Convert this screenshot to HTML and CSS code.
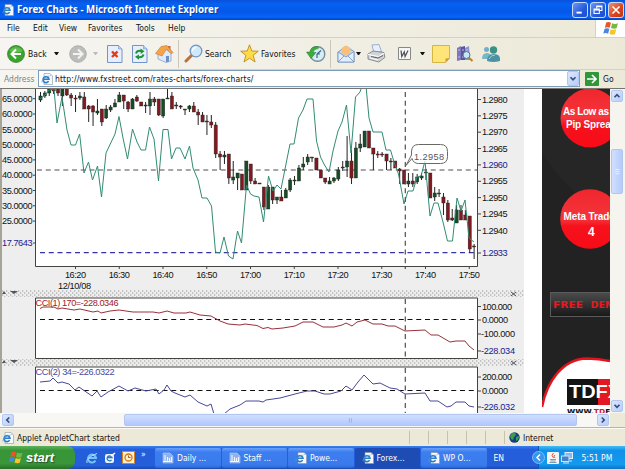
FILE: index.html
```html
<!DOCTYPE html>
<html lang="en">
<head>
  <meta charset="UTF-8" />
  <title>Forex Charts</title>
  <link rel="stylesheet" href="styles.css">
</head>
<body>
  <!-- shared icons -->
  <svg class="defs" width="0" height="0">
    <symbol id="ie" viewBox="0 0 12 12">
      <path d="M3 .5h6l2.5 2.5v8.5H3z" fill="#f7f8fb" stroke="#8a93a8" stroke-width=".6"/>
      <path d="M9 .5v2.6h2.5" fill="#c5cbdc"/>
      <path d="M7.6 8.2A3 3 0 1 1 8 6.3H2.6" fill="none" stroke="#2d7cc4" stroke-width="1.6"/>
      <path d="M1 9.5C.5 7 4 3.400 8.600 3" fill="none" stroke="#59a7e0" stroke-width=".7"/>
    </symbol>
    <symbol id="flag" viewBox="0 0 16 14">
      <path d="M3.500 1.500q2-1.200 4.500.2l-1.200 4.600q-2.400-1-4.500 0z" fill="#e9552a"/>
      <path d="M9 2.100q2.500 1.200 5.500.100l-1.300 4.600q-2.600 1-5.200-.2z" fill="#76b843"/>
      <path d="M2 7.200q2-1 4.500 0l-1.200 4.600q-2.300-1.200-4.500-.1z" fill="#4a86dc"/>
      <path d="M7.700 7.600q2.400 1.200 5.200.2l-1.200 4.500q-2.600 1-5.200-.2z" fill="#f5c52c"/>
    </symbol>
    <symbol id="doc" viewBox="0 0 12 12">
      <path d="M1 1h7l3 3v7H1z" fill="#8fb2ee" stroke="#b9cff6" stroke-width=".6"/>
      <path d="M3 3v6M1 9.500h9M5.500 5v4M7.500 6v3M9.500 5v4" stroke="#f2f6fd" stroke-width="1.100" fill="none"/>
    </symbol>
  </svg>

  <header class="titlebar">
    <svg class="title-icon" width="12" height="12"><use href="#ie"/></svg>
    <h1>Forex Charts - Microsoft Internet Explorer</h1>
    <div class="window-buttons">
      <span class="win-btn"><svg viewBox="0 0 16 16"><path d="M4 11h6" stroke="#fff" stroke-width="2.200"/></svg></span>
      <span class="win-btn"><svg viewBox="0 0 16 16"><path d="M6.500 6V3.500h6v5H10M3.500 7h6v5h-6zM3.500 8h6M6.500 4.300h6" fill="none" stroke="#fff" stroke-width="1.200"/></svg></span>
      <span class="win-btn close"><svg viewBox="0 0 16 16"><path d="M4 4l8 8M12 4l-8 8" stroke="#fff" stroke-width="1.800"/></svg></span>
    </div>
  </header>

  <nav class="menubar">
    <span>File</span><span>Edit</span><span>View</span><span>Favorites</span><span>Tools</span><span>Help</span>
    <div class="throbber"><svg width="18" height="15"><use href="#flag"/></svg></div>
  </nav>

  <div class="toolbar">
    <svg width="18" height="18" viewBox="0 0 18 18"><circle cx="9" cy="9" r="8.500" fill="#3ba42d" stroke="#2b7d25" stroke-width=".7"/><path d="M2.500 6a7 6 0 0 1 13 0q-6 3-13 0" fill="#7bcf66" opacity=".6"/><path d="M9 4.500L4.500 9 9 13.500M5 9h9" fill="none" stroke="#fff" stroke-width="2"/></svg>
    <span>Back</span>
    <i class="arrow"></i>
    <svg width="18" height="18" viewBox="0 0 18 18"><circle cx="9" cy="9" r="8.300" fill="#bdbdbb" stroke="#9e9e9b" stroke-width=".7"/><path d="M9 4.500L13.500 9 9 13.500M13 9H4" fill="none" stroke="#f3f3f0" stroke-width="2"/></svg>
    <i class="arrow off"></i>
    <svg width="16" height="18" viewBox="0 0 16 18"><path d="M.5.5h11l3.500 3.500v13.500H.5z" fill="#e5efff" stroke="#7494c8"/><path d="M11.500.5V4H15" fill="#bdd0f0" stroke="#7494c8" stroke-width=".6"/><path d="M5 6.500l5.500 5.500M10.500 6.500L5 12" stroke="#e43a14" stroke-width="2.400"/></svg>
    <svg width="16" height="18" viewBox="0 0 16 18"><path d="M.5.5h11l3.500 3.500v13.500H.5z" fill="#e5efff" stroke="#7494c8"/><path d="M11.500.5V4H15" fill="#bdd0f0" stroke="#7494c8" stroke-width=".6"/><path d="M4 8.500Q5 5 9.500 6M11.500 9.500Q10.500 13 6 12" fill="none" stroke="#219332" stroke-width="2"/><path d="M8.500 3.500L12.500 6.300 8.700 9zM7 9.500L3 11.800 7 14.800z" fill="#219332"/></svg>
    <svg width="19" height="19" viewBox="0 0 19 19"><path d="M3 9l6-5 7 5v8l-5 1.500L3 15z" fill="#dfe9f9" stroke="#7e9ac7" stroke-width=".7"/><path d="M13 2h2.500v4L13 4z" fill="#c96543"/><path d="M.5 9.500L6 2.500l6-1 6 7-1.500 1.500-5-5L7 12z" fill="#f3a44a" stroke="#c97728" stroke-width=".6"/><path d="M11 12h3v5.500l-3 .8z" fill="#6b8fc9"/></svg>
    <i class="sep"></i>
    <svg width="19" height="19" viewBox="0 0 19 19"><path d="M8 11L2 17" stroke="#b5723c" stroke-width="3" stroke-linecap="round"/><circle cx="12" cy="7" r="5.800" fill="#cfe8fb" stroke="#7295c2" stroke-width="1.300"/><path d="M8.500 7A3.500 3.500 0 0 1 12 3.500" stroke="#fff" stroke-width="1.500" fill="none"/></svg>
    <span>Search</span>
    <svg width="19" height="19" viewBox="0 0 19 19"><path d="M9.500.8l2.300 6.200 6.500.2-5.200 4.100 2 6.700-5.600-3.800L4 18l1.900-6.700L.7 7.200 7.200 7z" fill="#ffdc45" stroke="#c18a20" stroke-width=".9"/></svg>
    <span>Favorites</span>
    <svg width="20" height="18" viewBox="0 0 20 18"><circle cx="11.500" cy="9" r="7.300" fill="#d8ecf5" stroke="#748f98" stroke-width="1.400"/><path d="M11 9l4-3.500M11 9h3M11 9v4" stroke="#38688b" stroke-width="1.200"/><path d="M12.500 1.700Q5 .5 4 7H.5L5 13.500 10 7.500H7Q8 3.500 12.500 3.500" fill="#3dab3d" stroke="#247a2a" stroke-width=".5"/></svg>
    <i class="sep"></i>
    <svg width="18" height="18" viewBox="0 0 18 18"><path d="M1 7l8-6 8 5.500V17H1z" fill="#bed6f5" stroke="#6e8fbe" stroke-width=".8"/><circle cx="9" cy="5.500" r="4.500" fill="#fbc077"/><path d="M1 7l8 5 8-5.500V17H1z" fill="#e1eefe" stroke="#6e8fbe" stroke-width=".8"/><path d="M1 17l6-6M17 17l-6-6" stroke="#6e8fbe" stroke-width=".8"/></svg>
    <i class="arrow"></i>
    <svg width="19" height="19" viewBox="0 0 19 19"><path d="M5 1l7-.5 2.500 7L7 9z" fill="#e6f0ff" stroke="#7995bf" stroke-width=".7"/><path d="M1 10l5-3 11 1.500.8 5-6 4.500L1 15z" fill="#d2d3d4" stroke="#747980" stroke-width=".8"/><path d="M1 10.500l10.500 2 6-3.500M3 14l8 2" fill="none" stroke="#fff"/><path d="M4 12.500l7 1.500 5-2.500" fill="none" stroke="#5c6166"/></svg>
    <svg width="13" height="13" viewBox="0 0 13 13"><path d="M.5.5h12v12H.5z" fill="#f5f6f5" stroke="#888"/><path d="M3 3.500l.8 6L6.300 5l.8 4.500L10 3.500" fill="none" stroke="#555" stroke-width="1.300"/></svg>
    <i class="arrow"></i>
    <svg width="18" height="18" viewBox="0 0 18 18"><path d="M.5.5h17v13l-4 4H.5z" fill="#ffe477" stroke="#d5b543"/><path d="M17.500 13l-4 4.500v-4z" fill="#d69c25"/></svg>
    <svg width="18" height="18" viewBox="0 0 18 18"><path d="M1 3l4-2v14l-4 1z" fill="#7d77be"/><path d="M5 2l4-1v14H5z" fill="#56569b"/><path d="M9 3l4-2 1 14H9z" fill="#9094ca"/><path d="M2 5h2M6 5h2M10 5h2M2 12h2M6 12h2" stroke="#d2b5da"/><path d="M12 12l4.500 4" stroke="#b98129" stroke-width="2"/><circle cx="10.500" cy="10" r="3.500" fill="#c4e6f6" stroke="#4f7597"/></svg>
    <svg width="20" height="18" viewBox="0 0 20 18"><circle cx="5.500" cy="4.500" r="2.500" fill="#77acc9"/><path d="M1 14q0-6 5-6t5 6z" fill="#79b6c6"/><circle cx="12.500" cy="5" r="3.700" fill="#3c9086"/><path d="M6 16q0-7 7-7t6 7q-7 2-13 0" fill="#4d91a8"/><path d="M8 14q2-4 6-4" stroke="#a2d8a2" fill="none"/></svg>
  </div>

  <div class="addressbar">
    <label>Address</label>
    <div class="address">
      <svg width="12" height="12"><use href="#ie"/></svg>
      <span>http://www.fxstreet.com/rates-charts/forex-charts/</span>
      <b class="sb-btn"><svg viewBox="0 0 12 12"><path d="M3 4.500l3 3 3-3" class="chev"/></svg></b>
    </div>
    <svg class="go-icon" width="14" height="14" viewBox="0 0 14 14"><rect width="14" height="14" rx="1" fill="#31963a"/><path d="M7 3l4 4-4 4M10.500 7H2" fill="none" stroke="#fff" stroke-width="1.700"/></svg>
    <span class="go">Go</span>
  </div>

  <main class="content">
    <div class="page">
      <svg class="chart" width="522" height="324" viewBox="2 89 522 324">
        <defs>
          <pattern id="dots" width="4" height="4" patternUnits="userSpaceOnUse">
            <rect width="4" height="4" fill="#eee"/>
            <path d="M0 1h1.300M2 3h1.300" stroke="#999" stroke-width="1.200"/>
          </pattern>
          <clipPath id="mainClip"><rect x="36" y="89" width="441" height="177"/></clipPath>
        </defs>
        <rect x="2" y="89" width="522" height="324" fill="#eee"/>
        <rect x="36" y="89" width="441" height="177" fill="#fff"/>
        <path d="M35.500 89V266.500H477.500V89" class="frame"/>
        <g id="axes"></g>
        <path d="M37 170H477" class="cross dash"/>
        <path d="M40 252.700H477" class="last dash"/>
        <g clip-path="url(#mainClip)">
          <g id="candles"></g>
          <polyline id="overlay" class="overlay"/>
        </g>

        <rect x="2" y="290" width="522" height="7" fill="url(#dots)"/>
        <rect x="36" y="298" width="441" height="60" fill="#fff"/>
        <path d="M35.500 358.500V298H477.500V358.500z" class="frame"/>
        <path d="M40 319.500H477" class="zero dash"/>
        <polyline id="cci1" class="cci1"/>
        <text x="35.500" y="306" textLength="83" class="lbl red">CCI(1) 170=-228.0346</text>

        <rect x="2" y="359" width="522" height="7" fill="url(#dots)"/>
        <rect x="36" y="367" width="441" height="46" fill="#fff"/>
        <path d="M35.500 413V367H477.500V413" class="frame"/>
        <path d="M40 390.500H477" class="zero dash"/>
        <polyline id="cci2" class="cci2"/>
        <text x="35.500" y="375" textLength="79" class="lbl violet">CCI(2) 34=-226.0322</text>

        <path d="M405.300 92V269M405.300 299V358M405.300 368V413" class="cross dash"/>
        <path d="M10 291h8l-4 3zM10 360h8l-4 3zM2 294l2-3 2 3zM2 363l2-3 2 3z" fill="#555"/>
        <path d="M511 292l5 4M516 292l-5 4M511 361l5 4M516 361l-5 4" stroke="#555"/>
        <path d="M411.500 155V152q0-7.500 7-7.500h22q7 0 7 7v5q0 7-7 7h-22q-5 0-6.500-5l-6 7z" class="callout"/>
        <text x="414" y="160" textLength="30" class="lbl tip">1.2958</text>
      </svg>

      <aside class="banner">
        <svg width="68" height="324" viewBox="0 0 68 324">
          <defs>
            <linearGradient id="ball" x2="0" y2="1"><stop offset="0" stop-color="#f0262d"/><stop offset=".5" stop-color="#f4353b"/><stop offset=".62" stop-color="#f5121d"/><stop offset="1" stop-color="#f80b17"/></linearGradient>
            <linearGradient id="demo" x2="0" y2="1"><stop offset="0" stop-color="#4c4c4c"/><stop offset="1" stop-color="#181818"/></linearGradient>
          </defs>
          <rect width="68" height="324" fill="#222"/>
          <path d="M0 65Q25 100 68 135V0H0z" fill="#262626"/>
          <circle cx="48" cy="29" r="29.500" fill="url(#ball)"/>
          <circle cx="48" cy="130" r="29.800" fill="url(#ball)"/>
          <g class="ball-text">
            <text x="21" y="26" textLength="46">As Low as</text>
            <text x="24" y="39" textLength="56">Pip Spreads</text>
            <text x="21.500" y="131" textLength="55">Meta Trader</text>
            <text x="46" y="147" class="four">4</text>
          </g>
          <rect x="8.500" y="203.500" width="70" height="24" fill="url(#demo)" stroke="#5b5b5b"/>
          <g class="demo-text">
            <text x="11" y="219" textLength="30" lengthAdjust="spacingAndGlyphs">FREE</text>
            <text x="48.500" y="219" textLength="32" lengthAdjust="spacingAndGlyphs">DEMO</text>
          </g>
          <path d="M0 324V315C5 292 20 270 45 269.500Q57 270 68 272V324z" fill="#fff"/>
          <path d="M0 318C5 293 20 270 45 269.500Q57 270 68 272" fill="none" stroke="#e5111b" stroke-width="2.500"/>
          <rect x="25" y="290" width="31" height="26" fill="#141414"/>
          <rect x="56" y="290" width="12" height="26" fill="#e31822"/>
          <text x="27" y="309" textLength="52" lengthAdjust="spacingAndGlyphs" class="logo-text">TDFX</text>
          <text x="25" y="324.500" textLength="49" lengthAdjust="spacingAndGlyphs" class="www">WWW.<tspan fill="#d0222a">TD</tspan>FX</text>
        </svg>
      </aside>
    </div>
    <div class="vscroll">
      <b class="sb-btn"><svg viewBox="0 0 12 12"><path d="M3 7.500l3-3 3 3" class="chev"/></svg></b>
      <b class="thumb"><svg viewBox="0 0 12 12"><path d="M4 3h5M4 5.500h5M4 8h5" stroke="#eef4fe"/></svg></b>
      <b class="sb-btn down"><svg viewBox="0 0 12 12"><path d="M3 4.500l3 3 3-3" class="chev"/></svg></b>
    </div>
  </main>

  <div class="hscroll">
    <b class="sb-btn"><svg viewBox="0 0 12 12"><path d="M7.500 3l-3 3 3 3" class="chev"/></svg></b>
    <b class="thumb"><svg viewBox="0 0 12 12"><path d="M4 4v5M6.500 4v5" stroke="#8eaee8"/></svg></b>
    <b class="sb-btn"><svg viewBox="0 0 12 12"><path d="M4.500 3l3 3-3 3" class="chev"/></svg></b>
  </div>

  <div class="statusbar">
    <svg width="12" height="12"><use href="#ie"/></svg>
    <span class="status-text">Applet AppletChart started</span>
    <i></i><i></i><i></i><i></i><i></i><i></i>
    <svg class="globe" width="11" height="11" viewBox="0 0 11 11"><circle cx="5.500" cy="5.500" r="5.200" fill="#173b86"/><path d="M1 4q2-4 5-3l1 2-2 2-1 3-2-1zM7 5l3-1q0 4-3 5z" fill="#38a047"/></svg>
    <span class="zone">Internet</span>
  </div>

  <footer class="taskbar">
    <div class="start"><svg width="16" height="15"><use href="#flag"/></svg><span>start</span></div>
    <div class="quick">
      <svg width="12" height="12" viewBox="0 0 12 12"><path d="M9.500 8.500A4 4 0 1 1 10 6H3" fill="none" stroke="#74c3fa" stroke-width="2"/><path d="M1 11Q-1 6 11 1.500" fill="none" stroke="#b3dffb"/></svg>
      <svg width="12" height="12" viewBox="0 0 12 12"><rect x="1" y="2" width="9" height="9" rx="2" fill="#e9f3fd"/><path d="M7.500 8A2.500 2.500 0 1 1 8 5.500H4" fill="none" stroke="#2b77b5" stroke-width="1.300"/><path d="M7 4l4-3" stroke="#fff" stroke-width="1.500"/></svg>
      <svg width="13" height="13" viewBox="0 0 13 13"><rect x=".5" y=".5" width="12" height="12" fill="#fff1cd" stroke="#d98322"/><circle cx="6.500" cy="6.500" r="3.500" fill="none" stroke="#d17a1d" stroke-width="1.300"/><path d="M6.500 4.500v2h2" fill="none" stroke="#a85d13"/></svg>
      <span>»</span>
    </div>
    <div class="tasks">
      <div class="task"><svg width="12" height="12"><use href="#doc"/></svg>Daily ...</div>
      <div class="task"><svg width="12" height="12"><use href="#doc"/></svg>Staff ...</div>
      <div class="task"><svg width="12" height="12"><use href="#ie"/></svg>Powe...</div>
      <div class="task active"><svg width="12" height="12"><use href="#ie"/></svg>Forex...</div>
      <div class="task"><svg width="12" height="12"><use href="#ie"/></svg>WP O...</div>
    </div>
    <span class="lang">EN</span>
    <div class="tray">
      <svg class="expand" width="13" height="13" viewBox="0 0 13 13"><circle cx="6.500" cy="6.500" r="6" fill="#3795ef" stroke="#9bd2fb" stroke-width=".7"/><path d="M8 3.500l-3 3 3 3" fill="none" stroke="#fff" stroke-width="1.500"/></svg>
      <svg width="12" height="12" viewBox="0 0 12 12"><rect width="12" height="12" rx="1" fill="#f2f4f5"/><path d="M6.500 1q-3 2 0 5M8 3q-2 1 0 3" fill="none" stroke="#d85b3c"/><path d="M3 7.500h6M3.500 9h5M2.500 10.500h7" stroke="#697fa2" stroke-width=".8"/></svg>
      <svg width="12" height="12" viewBox="0 0 12 12"><rect x="4" y=".5" width="7.500" height="6" fill="#84b8ee" stroke="#dceeff"/><rect x=".5" y="4" width="7.500" height="5.500" fill="#4481c7" stroke="#cbe4fb"/><path d="M2 11h6M9 9h2" stroke="#d7e8f7"/></svg>
      <span>5:51 PM</span>
    </div>
  </footer>
  <script src="chart.js"></script>
</body>
</html>
```
FILE: styles.css
```css
* {
  margin: 0;
  padding: 0;
  box-sizing: border-box;
}

body {
  width: 625px;
  height: 469px;
  overflow: hidden;
  display: flex;
  flex-direction: column;
  background: #ece9d8;
  color: #111;
  font-family: "DejaVu Sans Condensed", "DejaVu Sans", Tahoma, sans-serif;
  font-stretch: condensed;
  font-size: 8.5px;
  white-space: nowrap;
}

svg {
  display: block;
  flex: none;
}

.defs {
  position: absolute;
}

/* Title bar */
.titlebar {
  height: 20px;
  flex: none;
  display: flex;
  align-items: center;
  padding: 0 1px 0 2px;
  background: linear-gradient(#0a50d8, #0561f2 20%, #0458e8 60%, #0565fb 85%, #0341bc);
}

.titlebar h1 {
  margin-left: 3px;
  width: 204px;
  color: #fff;
  font-family: "Noto Sans", sans-serif;
  font-stretch: normal;
  font-size: 9.7px;
  line-height: 18px;
  font-weight: bold;
  text-shadow: 1px 1px 0 #0a3aa0;
}

.window-buttons {
  display: flex;
  gap: 2px;
  margin-left: auto;
}

.win-btn {
  width: 16px;
  height: 16px;
  border: 1px solid #c9dafb;
  border-radius: 3px;
  background: linear-gradient(135deg, #6f98f5, #2459d9 60%, #1c4fd0);
}

.win-btn.close {
  background: linear-gradient(135deg, #ee9176, #d9441c 60%, #bf3612);
}

/* Menu */
.menubar {
  height: 18px;
  flex: none;
  display: grid;
  grid-template-columns: 26px 26px 29px 48px 32px 1fr 30px;
  align-items: center;
  padding-left: 7px;
  background: linear-gradient(90deg, #f6f5f1, #ece9d8);
  border-bottom: 1px solid #d4d1c3;
}

.menubar span {
  margin-top: -2px;
}

.throbber {
  height: 17px;
  padding: 1px 0 0 6px;
  background: #fff;
  border-left: 1px solid #d4d1c3;
}

.toolbar {
  height: 32px;
  flex: none;
  display: grid;
  grid-template-columns: 21px 26px 15px 24px 14px 25px 23px 23px 6px 21px 35px 21px 45px 24px 7px 19px 11px 31px 22px 12px 24px 25px 20px;
  align-items: center;
  padding-left: 7px;
  background: linear-gradient(90deg, #f6f5f1, #ece9d8);
  border-bottom: 1px solid #d4d1c3;
}

.arrow {
  width: 5px;
  border: 2.5px solid transparent;
  border-top: 3px solid #111;
  border-bottom: 0;
}

.arrow.off {
  border-top-color: #bbb;
}

.sep {
  width: 1px;
  height: 28px;
  background: #cbc7b8;
}

/* Address */
.addressbar {
  height: 19px;
  flex: none;
  display: flex;
  align-items: center;
  padding: 0 0 1px 4px;
  background: linear-gradient(90deg, #f6f5f1, #ece9d8);
  border-bottom: 1px solid #77756d;
}

.addressbar label {
  width: 34px;
  color: #858378;
}

.address {
  width: 542px;
  height: 17px;
  display: flex;
  align-items: center;
  padding-left: 2px;
  background: #fff;
  border: 1px solid #7f9db9;
}

.address span {
  margin-left: 2px;
  letter-spacing: 0.13px;
}

.address .sb-btn {
  margin-left: auto;
  height: 15px;
}

.go-icon {
  margin-left: 5px;
}

.go {
  margin-left: 4px;
}

/* Content */
.content {
  height: 324px;
  flex: none;
  display: flex;
  border-left: 2px solid #a6a397;
  background: #fff;
}

.page {
  width: 608px;
  flex: none;
  display: flex;
}

.banner {
  margin-left: 18px;
}

.lbl,
.axis {
  font-family: "Liberation Sans", Arial, sans-serif;
  font-stretch: normal;
  font-size: 9.2px;
  fill: #111;
}

.axis.blue { fill: #20208c; }
.lbl.red { fill: #a02027; }
.lbl.violet { fill: #4a469b; }
.lbl.tip { fill: #555; }

.frame {
  fill: none;
  stroke: #44443e;
}

.dash {
  fill: none;
  stroke-width: 1.2;
  stroke-dasharray: 5 3.75;
}

.cross { stroke: #514d50; }
.last { stroke: #3434a2; }
.zero { stroke: #111; }

.overlay,
.cci1,
.cci2 {
  fill: none;
  stroke: #318c73;
  stroke-width: 1;
}

.cci1 { stroke: #98303a; }
.cci2 { stroke: #48489a; }

.callout {
  fill: #fff;
  fill-opacity: 0.8;
  stroke: #686864;
}

.wick { stroke: #222; }
.up { fill: #164d24; stroke: #222; stroke-width: 0.4; }
.fall { fill: #81191f; stroke: #222; stroke-width: 0.4; }

.ball-text {
  fill: #fff;
  font: bold 10px "Liberation Sans", Arial, sans-serif;
}

.ball-text .four {
  font-size: 12px;
}

.demo-text {
  fill: #e51b20;
  font: bold 8px "DejaVu Sans", sans-serif;
}

.logo-text {
  fill: #fff;
  font: bold 18px "Liberation Sans", Arial, sans-serif;
}

.www {
  fill: #111;
  font: bold 7px "DejaVu Sans", sans-serif;
}

/* Scrollbars */
.sb-btn,
.thumb {
  display: block;
  flex: none;
  width: 12px;
  height: 12px;
  border: 1px solid #b3c6ef;
  border-radius: 2px;
  background: linear-gradient(135deg, #dce7ff, #b8cdfa);
}

.sb-btn svg {
  width: 100%;
  height: 100%;
}

.chev {
  fill: none;
  stroke: #334d7c;
  stroke-width: 2;
}

.vscroll {
  width: 15px;
  padding: 1px;
  display: flex;
  flex-direction: column;
  background: #f5f4ef;
}

.vscroll .thumb {
  height: 45px;
  margin-top: 47px;
  display: flex;
  align-items: center;
  background: linear-gradient(90deg, #d1dfff, #b6cbfb);
}

.vscroll .down {
  margin-top: auto;
}

.hscroll {
  height: 15px;
  flex: none;
  display: flex;
  align-items: center;
  padding-left: 2px;
  border-bottom: 1px solid #b8b5a6;
  background: linear-gradient(90deg, #f8f7f3 610px, #ece9d8 610px);
}

.hscroll .thumb {
  width: 453px;
  margin: 0 20px 0 110px;
  display: flex;
  justify-content: center;
  background: linear-gradient(#d1dfff, #b2c8fb);
}

.thumb svg {
  width: 10px;
  height: 10px;
}

/* Status bar */
.statusbar {
  height: 18px;
  flex: none;
  display: flex;
  align-items: center;
  padding-left: 2px;
  border-top: 1px solid #faf9f3;
}

.status-text {
  width: 395px;
  padding-left: 3px;
}

.statusbar i {
  width: 1px;
  height: 13px;
  margin-right: 18px;
  background: #c6c2b0;
}

.statusbar i:nth-of-type(6) {
  margin-right: 4px;
}

.zone {
  margin-left: 3px;
}

/* Taskbar */
.taskbar {
  height: 23px;
  flex: none;
  display: flex;
  align-items: stretch;
  color: #fff;
  background: linear-gradient(#3a80f0, #245edb 15%, #245edb 85%, #1c48ae);
}

.start {
  width: 75px;
  display: flex;
  align-items: center;
  padding-left: 8px;
  border-radius: 0 8px 8px 0;
  background: linear-gradient(#5fb25c, #379537 20%, #39973a 75%, #286f29);
}

.start span {
  margin-left: 2px;
  font: italic bold 13px "Liberation Sans", Arial, sans-serif;
  text-shadow: 1px 1px 1px #234f23;
}

.quick {
  width: 80px;
  display: flex;
  align-items: center;
  gap: 6px;
  padding-left: 11px;
}

.quick span {
  margin-top: -8px;
}

.tasks {
  display: flex;
  gap: 1px;
}

.task {
  width: 65.500px;
  margin: 2px 0 1px;
  display: flex;
  align-items: center;
  gap: 3px;
  padding-left: 7px;
  border-radius: 2px;
  background: linear-gradient(#6aa1fb, #3c7eef 20%, #397aec 85%, #2c65d4);
}

.task.active {
  background: #1c4cb4;
}

.lang {
  width: 51px;
  padding: 7px 0 0 7px;
}

.tray {
  flex: 1;
  display: flex;
  align-items: center;
  gap: 2px;
  border-left: 1px solid #0c59b7;
  background: linear-gradient(#3ebdf6, #1290e8 20%, #139aee 80%, #0d74c4);
}

.tray .expand {
  margin-left: -7px;
}

.tray span {
  margin-left: 7px;
}
```
FILE: chart.js
```javascript
const NS = 'http://www.w3.org/2000/svg';

// one row per minute: [high, body top, body bottom, low, direction]
const candles = [
  [92, 96, 100, 102, 1], [91, 93, 96, 98, 1], [89, 89, 93, 96, 1], [87, 88, 91, 94, 0], [87, 88, 93, 96, 0],
  [87, 88, 96, 106, 1], [87, 88, 95, 96, 0], [93, 95, 98, 106, 0], [95, 98, 99, 112, 0], [92, 96, 98, 100, 1],
  [92, 97, 109, 109, 0], [105, 106, 109, 122, 0], [105, 106, 112, 126, 0], [99, 111, 113, 115, 1], [109, 109, 122, 126, 0],
  [105, 109, 118, 119, 1], [105, 107, 110, 112, 1], [99, 103, 107, 107, 1], [92, 95, 102, 102, 1], [95, 95, 101, 109, 0],
  [101, 102, 109, 112, 0], [98, 99, 109, 109, 1], [95, 97, 101, 102, 0], [102, 102, 106, 106, 0], [102, 105, 106, 113, 1],
  [92, 99, 106, 115, 1], [97, 99, 102, 106, 0], [99, 99, 115, 116, 0], [99, 99, 116, 118, 1], [89, 98, 99, 99, 1],
  [92, 96, 109, 109, 0], [102, 105, 106, 109, 1], [105, 106, 107, 109, 0], [109, 109, 110, 115, 1], [105, 106, 109, 112, 1],
  [102, 106, 112, 112, 0], [109, 112, 115, 125, 0], [112, 115, 122, 122, 0], [115, 121, 122, 135, 0], [115, 122, 125, 128, 0],
  [122, 125, 154, 158, 0], [151, 154, 157, 170, 0], [151, 155, 157, 164, 1], [154, 154, 178, 184, 0], [161, 177, 180, 184, 1],
  [173, 173, 178, 190, 1], [174, 174, 190, 190, 0], [161, 161, 190, 190, 1], [164, 164, 181, 184, 0], [178, 181, 184, 184, 0],
  [183, 183, 184, 184, 0], [187, 187, 207, 210, 0], [185, 187, 209, 209, 1], [187, 187, 200, 204, 0], [197, 197, 200, 204, 1],
  [190, 197, 201, 201, 0], [188, 190, 198, 198, 1], [178, 180, 190, 192, 1], [176, 180, 181, 185, 1], [165, 168, 181, 181, 1],
  [157, 164, 167, 170, 1], [154, 157, 162, 165, 1], [157, 157, 158, 162, 0], [158, 158, 170, 170, 0], [170, 170, 178, 178, 0],
  [178, 178, 182, 184, 0], [177, 181, 184, 184, 1], [177, 178, 181, 183, 1], [167, 170, 179, 181, 1], [161, 167, 168, 171, 1],
  [136, 161, 167, 177, 1], [150, 161, 178, 184, 0], [142, 148, 178, 178, 1], [134, 144, 148, 152, 1], [131, 131, 147, 147, 1],
  [131, 131, 148, 148, 0], [148, 148, 154, 170, 0], [151, 154, 155, 158, 0], [152, 154, 155, 157, 0], [154, 154, 161, 170, 0],
  [158, 161, 162, 170, 0], [161, 161, 168, 168, 0], [168, 169, 171, 184, 0], [170, 170, 184, 184, 0], [173, 181, 184, 187, 1],
  [173, 181, 184, 187, 0], [174, 177, 182, 184, 1], [173, 176, 178, 180, 1], [169, 172, 173, 180, 1], [173, 173, 198, 198, 0],
  [187, 193, 197, 201, 1], [189, 193, 194, 197, 0], [193, 197, 203, 215, 0], [200, 203, 220, 222, 0], [209, 218, 220, 221, 0],
  [205, 210, 223, 223, 1], [205, 210, 220, 220, 0], [210, 215, 220, 220, 0], [216, 216, 249, 253, 0], [244, 246, 247, 259, 0]
];

const overlay = '40,99 45,95 49,90 54,89 57,123 62,97 67,130 71,145 75.500,145 79.600,134 84,173 88.500,162 92.500,180 97.500,166 101.500,197 106,153 115,134 119,116.500 123,138 127.500,159 132.500,129 137,142 141,150 145.500,150 149.500,127 154,139 158.500,181 163,129.500 168,129.500 171.500,159 176,148 180,148 185,159 189.500,146 193,168 198,180 202,198 207,198 211.500,206 215.500,252 220,253 224,237 228.500,256 233,259 237.500,231 241.500,243 246.500,185 250.500,194 254,196 259,197 263.500,222 268.500,176 273,191 277,185 281,189 290,144 294,144 298.500,118 303,110 307,99 313,99 316.500,141 320.500,157 324.500,165 329,172 333,151 338,131 342,122 346.500,105 351,153 355.500,97 360,92 362,86 366,86 369,118 373,132 382,132 386,150 390.500,150 394,162 398.500,174 404,204 408,191 413,191 417,177 421,176 425,161 430,216 434,203 438,203 443,222 447.500,241 452.500,241 457,198 461,211 465,200 469,238 474,242';

const cci1 = '40,308.500 43,307 54,307 58,309 62,308 74,310 80,309 93,312 98,311 101,313 110,311 119,310 133,312 153,312 159,313 167,311 174,313 186,313 190,312 200,315 211,316 220,321 228,324 240,325 245,324 257,325.500 263,328.500 268,327.500 272,329 283,328 295,326 303,322 313,322 323,327 334,327 342,325 346,323 352,326 357,322 365,320 373,324 382,324 388,326 395,326 405,331 425,330 431,335 438,335 450,342 456,341 465,341 469,346 474,350';

const cci2 = '40,382 50,381 53,378 58,383 62,382 69,384 75,390 79,387 92,396 97,391 101,397 108,392 119,386 128,391 135,388 146,391 156,389 159,394 164,390 167,385 171,391 175,393 185,397 190,395 198,402 207,406 211,404 214,414 224,414 230,409 240,405 246,401 259,401 263,402 266,400 280,398 295,394 307,391 315,391 324,394 330,394 341,391 346,386 352,390 358,382 364,375 373,384 380,383 390,388 397,389 405,394 425,393 430,401 438,401 447,407 451,406 456,402 465,402 469,406 474,407';

function add(parent, tag, attrs, text) {
  const el = document.createElementNS(NS, tag);
  for (const key in attrs) el.setAttribute(key, attrs[key]);
  if (text) el.textContent = text;
  parent.appendChild(el);
}

const group = document.getElementById('candles');
candles.forEach(([high, top, bottom, low, up], i) => {
  const x = 40.5 + i * 4.38;
  add(group, 'path', { d: `M${x} ${high}V${low}`, class: 'wick' });
  add(group, 'rect', { x: x - 1.6, y: top, width: 3.2, height: bottom - top, class: up ? 'up' : 'fall' });
});

document.getElementById('overlay').setAttribute('points', overlay);
document.getElementById('cci1').setAttribute('points', cci1);
document.getElementById('cci2').setAttribute('points', cci2);

// axis labels: [text, x, centre y, width, blue]
const axes = document.getElementById('axes');
const labels = [];
['65', '60', '55', '50', '45', '40', '35', '30', '25'].forEach((v, i) => labels.push([v + '.0000', 2, 98.7 + i * 15.3, 30.5]));
labels.push(['17.7643', 2, 243, 30.5, true]);
['80', '75', '70', '65', '60', '55', '50', '45', '40'].forEach((v, i) => labels.push(['1.29' + v, 482, 99.5 + i * 16.35, 25.5, v === '60']));
labels.push(['1.2933', 482, 253, 25.5, true]);
labels.push(['100.000', 482, 306.5, 30], ['0.0000', 482, 320, 26], ['-100.000', 481, 334, 34], ['-228.034', 481, 351, 34, true]);
labels.push(['200.000', 482, 377, 30], ['0.0000', 482, 391, 26], ['-226.032', 481, 407, 34, true]);

labels.forEach(([text, x, y, width, blue]) => {
  add(axes, 'text', { x, y: y + 3.2, textLength: width, class: blue ? 'axis blue' : 'axis' }, text);
  add(axes, 'path', { d: x < 100 ? `M33 ${y}h3` : `M478 ${y}h3`, class: 'frame' });
});

['16:20', '16:30', '16:40', '16:50', '17:00', '17:10', '17:20', '17:30', '17:40', '17:50'].forEach((t, i) => {
  const x = 75.5 + i * 43.75;
  add(axes, 'text', { x: x - 10.5, y: 277.7, textLength: 21, class: 'axis' }, t);
  add(axes, 'path', { d: `M${x} 266v3`, class: 'frame' });
});
add(axes, 'text', { x: 58, y: 288.5, textLength: 33, class: 'axis' }, '12/10/08');
```
